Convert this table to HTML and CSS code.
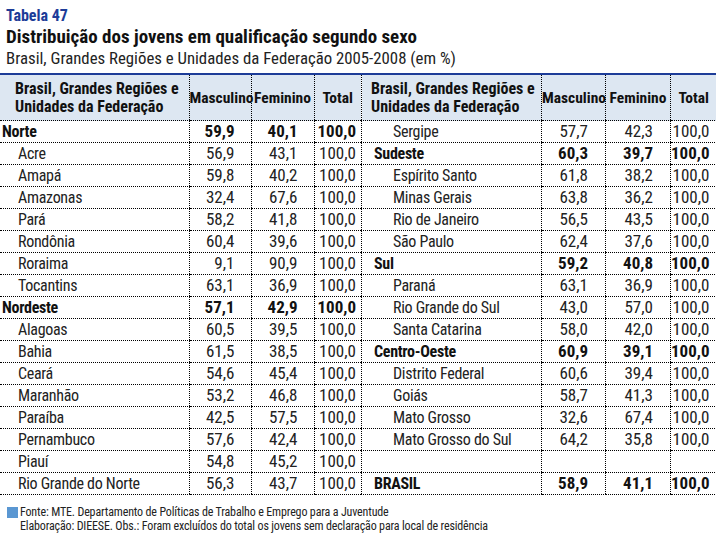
FILE: index.html
```html
<!DOCTYPE html>
<html lang="pt">
<head>
<meta charset="utf-8">
<title>Tabela 47</title>
<link rel="stylesheet" href="styles.css">
</head>
<body>
<div class="page">
  <div class="label">Tabela 47</div>
  <h1 class="title">Distribuição dos jovens em qualificação segundo sexo</h1>
  <div class="subtitle">Brasil, Grandes Regiões e Unidades da Federação 2005-2008 (em %)</div>
  <div class="rule"></div>
  <div class="tables">
    <table class="tbl left">
      <colgroup><col class="c-name-l"><col class="c-m-l"><col class="c-f-l"><col class="c-t-l"></colgroup>
      <thead>
        <tr><th class="hname">Brasil, Grandes Regiões e<br>Unidades da Federação</th><th>Masculino</th><th>Feminino</th><th>Total</th></tr>
      </thead>
      <tbody>
        <tr class="reg"><td class="name">Norte</td><td class="m">59,9</td><td class="f">40,1</td><td class="t">100,0</td></tr>
        <tr><td class="name sub">Acre</td><td class="m">56,9</td><td class="f">43,1</td><td class="t">100,0</td></tr>
        <tr><td class="name sub">Amapá</td><td class="m">59,8</td><td class="f">40,2</td><td class="t">100,0</td></tr>
        <tr><td class="name sub">Amazonas</td><td class="m">32,4</td><td class="f">67,6</td><td class="t">100,0</td></tr>
        <tr><td class="name sub">Pará</td><td class="m">58,2</td><td class="f">41,8</td><td class="t">100,0</td></tr>
        <tr><td class="name sub">Rondônia</td><td class="m">60,4</td><td class="f">39,6</td><td class="t">100,0</td></tr>
        <tr><td class="name sub">Roraima</td><td class="m">9,1</td><td class="f">90,9</td><td class="t">100,0</td></tr>
        <tr><td class="name sub">Tocantins</td><td class="m">63,1</td><td class="f">36,9</td><td class="t">100,0</td></tr>
        <tr class="reg"><td class="name">Nordeste</td><td class="m">57,1</td><td class="f">42,9</td><td class="t">100,0</td></tr>
        <tr><td class="name sub">Alagoas</td><td class="m">60,5</td><td class="f">39,5</td><td class="t">100,0</td></tr>
        <tr><td class="name sub">Bahia</td><td class="m">61,5</td><td class="f">38,5</td><td class="t">100,0</td></tr>
        <tr><td class="name sub">Ceará</td><td class="m">54,6</td><td class="f">45,4</td><td class="t">100,0</td></tr>
        <tr><td class="name sub">Maranhão</td><td class="m">53,2</td><td class="f">46,8</td><td class="t">100,0</td></tr>
        <tr><td class="name sub">Paraíba</td><td class="m">42,5</td><td class="f">57,5</td><td class="t">100,0</td></tr>
        <tr><td class="name sub">Pernambuco</td><td class="m">57,6</td><td class="f">42,4</td><td class="t">100,0</td></tr>
        <tr><td class="name sub">Piauí</td><td class="m">54,8</td><td class="f">45,2</td><td class="t">100,0</td></tr>
        <tr><td class="name sub">Rio Grande do Norte</td><td class="m">56,3</td><td class="f">43,7</td><td class="t">100,0</td></tr>
      </tbody>
    </table>
    <table class="tbl right">
      <colgroup><col class="c-name-r"><col class="c-m-r"><col class="c-f-r"><col class="c-t-r"></colgroup>
      <thead>
        <tr><th class="hname">Brasil, Grandes Regiões e<br>Unidades da Federação</th><th>Masculino</th><th>Feminino</th><th>Total</th></tr>
      </thead>
      <tbody>
        <tr><td class="name sub">Sergipe</td><td class="m">57,7</td><td class="f">42,3</td><td class="t">100,0</td></tr>
        <tr class="reg"><td class="name">Sudeste</td><td class="m">60,3</td><td class="f">39,7</td><td class="t">100,0</td></tr>
        <tr><td class="name sub">Espírito Santo</td><td class="m">61,8</td><td class="f">38,2</td><td class="t">100,0</td></tr>
        <tr><td class="name sub">Minas Gerais</td><td class="m">63,8</td><td class="f">36,2</td><td class="t">100,0</td></tr>
        <tr><td class="name sub">Rio de Janeiro</td><td class="m">56,5</td><td class="f">43,5</td><td class="t">100,0</td></tr>
        <tr><td class="name sub">São Paulo</td><td class="m">62,4</td><td class="f">37,6</td><td class="t">100,0</td></tr>
        <tr class="reg"><td class="name">Sul</td><td class="m">59,2</td><td class="f">40,8</td><td class="t">100,0</td></tr>
        <tr><td class="name sub">Paraná</td><td class="m">63,1</td><td class="f">36,9</td><td class="t">100,0</td></tr>
        <tr><td class="name sub">Rio Grande do Sul</td><td class="m">43,0</td><td class="f">57,0</td><td class="t">100,0</td></tr>
        <tr><td class="name sub">Santa Catarina</td><td class="m">58,0</td><td class="f">42,0</td><td class="t">100,0</td></tr>
        <tr class="reg"><td class="name">Centro-Oeste</td><td class="m">60,9</td><td class="f">39,1</td><td class="t">100,0</td></tr>
        <tr><td class="name sub">Distrito Federal</td><td class="m">60,6</td><td class="f">39,4</td><td class="t">100,0</td></tr>
        <tr><td class="name sub">Goiás</td><td class="m">58,7</td><td class="f">41,3</td><td class="t">100,0</td></tr>
        <tr><td class="name sub">Mato Grosso</td><td class="m">32,6</td><td class="f">67,4</td><td class="t">100,0</td></tr>
        <tr><td class="name sub">Mato Grosso do Sul</td><td class="m">64,2</td><td class="f">35,8</td><td class="t">100,0</td></tr>
        <tr class="blank"><td class="name"></td><td class="m"></td><td class="f"></td><td class="t"></td></tr>
        <tr class="reg total-row"><td class="name">BRASIL</td><td class="m">58,9</td><td class="f">41,1</td><td class="t">100,0</td></tr>
      </tbody>
    </table>
  </div>
  <div class="footer">
    <span class="square"></span>
    <div class="notes">
      <div>Fonte: MTE. Departamento de Políticas de Trabalho e Emprego para a Juventude</div>
      <div>Elaboração: DIEESE. Obs.: Foram excluídos do total os jovens sem declaração para local de residência</div>
    </div>
  </div>
</div>
</body>
</html>
```

FILE: styles.css
```css
html, body {
  margin: 0;
  padding: 0;
  background: #ffffff;
}
body {
  font-family: Roboto, "Open Sans", sans-serif;
  font-stretch: 75%;
  color: #1a1a1a;
}
.page {
  width: 716px;
}
.label {
  padding: 6px 0 0 6px;
  font-size: 16px;
  font-weight: bold;
  color: #1d3c98;
  line-height: 20px;
}
.title {
  margin: 0;
  padding-left: 6px;
  font-size: 19px;
  font-weight: bold;
  line-height: 22px;
  color: #111;
}
.subtitle {
  padding-left: 6px;
  font-size: 16.8px;
  line-height: 20px;
  color: #222;
}
.rule {
  margin-top: 5px;
  height: 2px;
  background: #1d3c98;
  width: 716px;
}
.tables {
  display: flex;
  align-items: flex-start;
}
.tbl {
  border-collapse: collapse;
  table-layout: fixed;
  font-size: 17px;
}
.tbl.left { width: 361px; }
.tbl.right { width: 355px; border-left: 1px dotted #000; }
.c-name-l { width: 189px; }
.c-m-l { width: 62px; }
.c-f-l { width: 63px; }
.c-t-l { width: 47px; }
.c-name-r { width: 180px; }
.c-m-r { width: 64px; }
.c-f-r { width: 65px; }
.c-t-r { width: 46px; }
.tbl thead tr {
  background: #dde7f2;
}
.tbl th {
  height: 45px;
  font-weight: bold;
  font-size: 15.5px;
  line-height: 18px;
  color: #111;
  padding: 0;
  text-align: center;
  white-space: nowrap;
  border-left: 1px dotted #000;
  border-bottom: 1px dotted #000;
}
.tbl th:first-child { border-left: none; }
.tbl th.hname { font-size: 16px; }
.tbl.left th.hname { text-align: left; padding-left: 15px; }
.tbl.right th.hname { text-align: left; padding-left: 9px; }
.tbl td {
  height: 21px;
  padding: 0;
  line-height: 21px;
  border-bottom: 1px dotted #000;
  border-left: 1px dotted #000;
  color: #222;
  white-space: nowrap;
}
.tbl td:first-child { border-left: none; }
.tbl td.name {
  font-size: 16px;
  letter-spacing: -0.3px;
}
.tbl td.m, .tbl td.f { text-align: right; padding-right: 16px; }
.tbl td.t { text-align: right; padding-right: 5px; }
.tbl.right td.m, .tbl.right td.f { padding-right: 17px; }
.tbl.right td.t { padding-right: 7px; }
.tbl.left td.name { padding-left: 2px; }
.tbl.left td.name.sub { padding-left: 18px; }
.tbl.right td.name { padding-left: 12px; }
.tbl.right td.name.sub { padding-left: 31px; }
.tbl tr.reg td {
  font-weight: bold;
  color: #111;
}
.footer {
  display: flex;
  align-items: flex-start;
  margin-top: 10px;
  padding-left: 7px;
}
.square {
  width: 11px;
  height: 11px;
  background: #5a97d2;
  margin-top: 2px;
  margin-right: 2px;
  flex: none;
}
.notes {
  font-size: 12px;
  letter-spacing: -0.15px;
  line-height: 14px;
  color: #222;
}
```
